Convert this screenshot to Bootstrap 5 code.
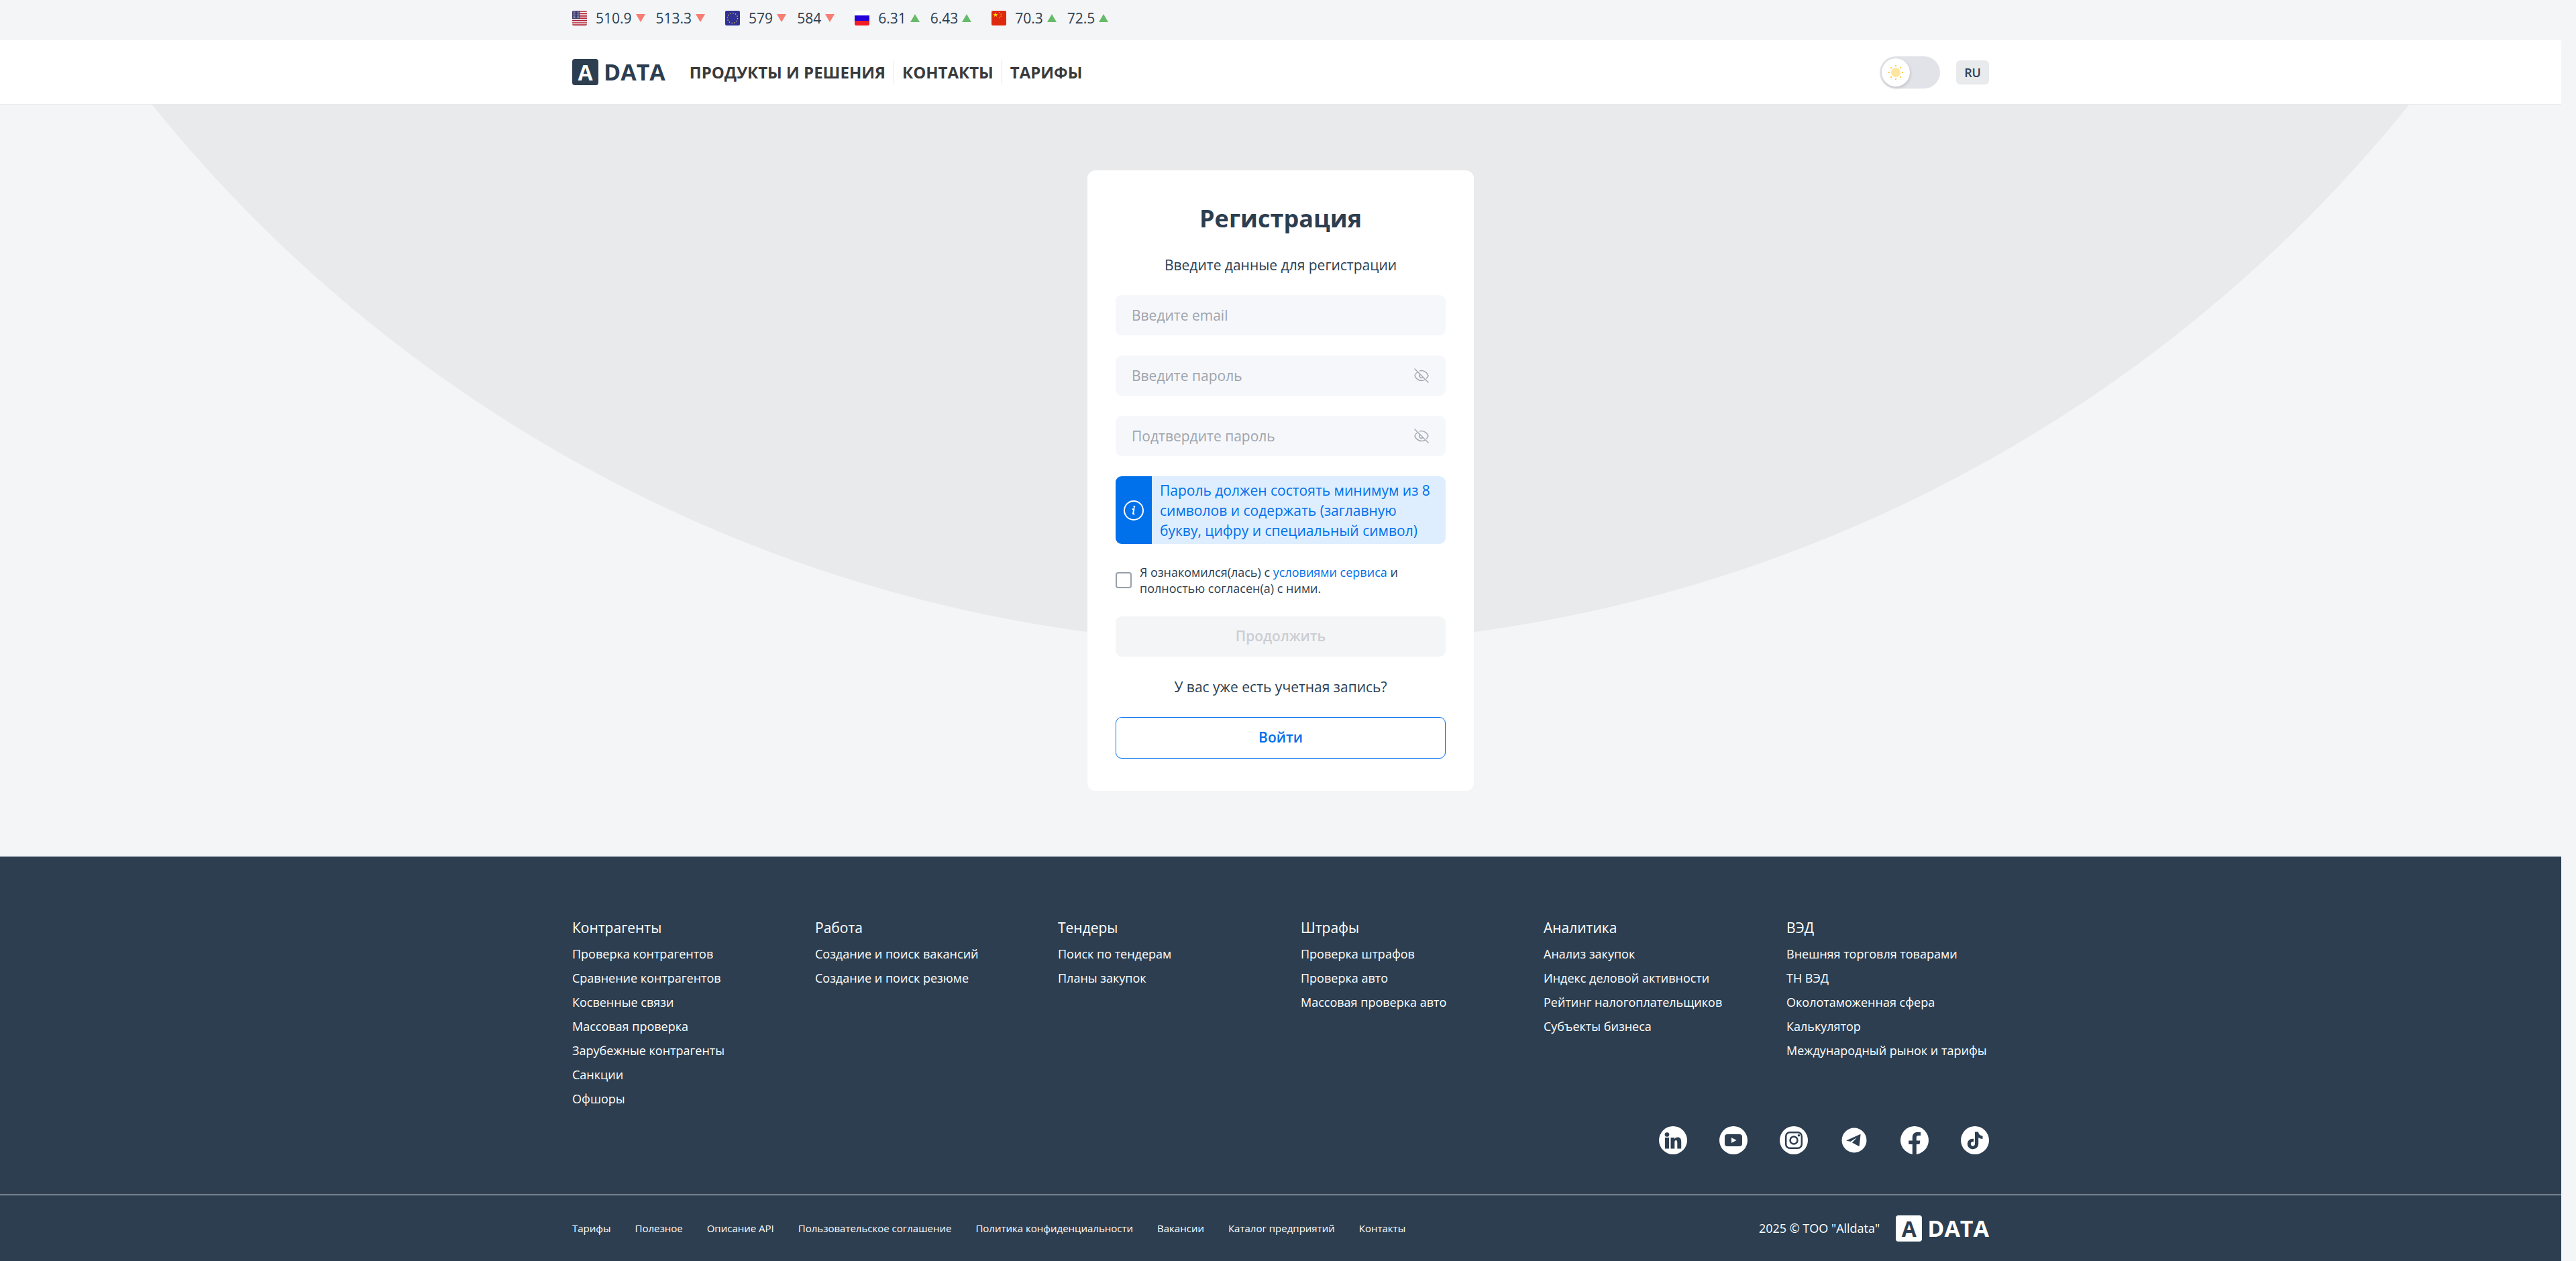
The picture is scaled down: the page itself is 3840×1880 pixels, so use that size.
<!DOCTYPE html>
<html lang="ru">
<head>
<meta charset="utf-8">
<meta name="viewport" content="width=device-width, initial-scale=1">
<title>Регистрация — Adata</title>
<link href="https://cdn.jsdelivr.net/npm/bootstrap@5.3.0/dist/css/bootstrap.min.css" rel="stylesheet">
<style>
:root { --ink: #2c3e50; --page: #f4f5f7; --shade: #e9eaec; --blue: #0070eb; --gutter: 22px; }
body { font-family: "Open Sans", "Noto Sans", sans-serif; font-size: 21px; line-height: 30px; color: var(--ink); background: var(--page); padding-right: var(--gutter); min-height: 100vh; }
a { text-decoration: none; color: inherit; }
.wrap { width: 100%; max-width: 2112px; margin: 0 auto; }
.rates { height: 60px; padding-bottom: 6px; }
.rates .wrap { gap: 30px; }
.flag { width: 22px; height: 22px; margin-right: 13px; border-radius: 2px; }
.rate { display: flex; align-items: center; gap: 6px; }
.rate + .rate { margin-left: 16px; }
.rate svg { width: 14px; height: 12px; }
.topbar { height: 96px; background: #fff; border-bottom: 1px solid var(--shade); }
.brand { display: flex; align-items: center; font-size: 34px; font-weight: 700; line-height: 39px; gap: 8px; color: var(--ink); }
.brand-box { width: 39px; height: 39px; border-radius: 4px; background: var(--ink); color: #fff; font-size: 32px; text-align: center; }
.brand-light { color: #fff; }
.brand-light .brand-box { background: #fff; color: var(--ink); }
.mainmenu { margin-left: 36px; font-size: 24px; font-weight: 700; line-height: 36px; color: #3a3a3a; }
.mainmenu a + a { border-left: 1px solid #e4e6e9; margin-left: 12px; padding-left: 12px; }
.theme { position: relative; width: 90px; height: 48px; }
.theme input { appearance: none; width: 90px; height: 48px; margin: 0; border-radius: 24px; background: #e2e3e8; display: block; }
.theme .knob { position: absolute; left: 3px; top: 3px; width: 42px; height: 42px; border-radius: 50%; background: #fff; box-shadow: 1px 2px 4px rgba(0,0,0,.15); pointer-events: none; }
.lang { height: 36px; padding: 0 12px; border: 0; border-radius: 6px; background: var(--shade); color: var(--ink); font-size: 18px; line-height: 36px; font-weight: 600; }
.stage { padding: 98px 0; background: radial-gradient(circle 2160px at 50% -1354px, var(--shade) 2159px, transparent 2160px); }
.panel { width: 576px; padding: 48px 42px; border-radius: 12px; background: #fff; gap: 30px; }
.panel h1 { font-size: 36px; line-height: 48px; font-weight: 700; margin: 0; text-align: center; }
.field { position: relative; }
.field .form-control { height: 60px; border: 0; border-radius: 9px; background: #f5f7fb; padding: 0 24px; font-size: 21px; line-height: 30px; }
.field .form-control::placeholder { color: #9ea4ac; opacity: 1; }
.eye { position: absolute; right: 24px; top: 18px; width: 24px; height: 24px; padding: 0; border: 0; background: none; display: block; line-height: 0; }
.hint { border-radius: 9px; overflow: hidden; background: #deeeff; color: var(--blue); min-height: 101px; }
.hint-icon { width: 54px; background: var(--blue); }
.hint p { padding: 0 12px; margin: 0; flex: 1; }
.agree { gap: 12px; font-size: 18px; line-height: 24px; }
.agree input { appearance: none; width: 24px; height: 24px; border: 2px solid #97a0aa; border-radius: 4px; margin: 0; flex: none; }
.agree a { color: var(--blue); }
.wide { height: 60px; border-radius: 9px; font-size: 21px; font-weight: 600; padding: 0; border: 0; width: 100%; }
.wide:disabled { background: #f4f5f7; color: #cbced3; opacity: 1; }
.enter { height: 62px; border: 1px solid var(--blue); color: var(--blue); background: #fff; }
.foot { background: var(--ink); color: #fff; }
.foot-main { padding-top: 91px; }
.foot-grid { display: grid; grid-template-columns: repeat(6, minmax(0, 1fr)); column-gap: 60px; }
.foot-grid h2 { font-size: 21px; line-height: 30px; font-weight: 400; margin: 0 0 6px; }
.foot-grid ul { font-size: 18px; line-height: 36px; margin: 0; white-space: nowrap; }
.socials { gap: 48px; padding: 23px 0 60px; }
.socials a, .socials svg { display: block; width: 42px; height: 42px; }
.foot-bottom { border-top: 1px solid #fff; height: 99px; }
.legal { gap: 36px; font-size: 15px; line-height: 24px; }
.copy { font-size: 18px; }
</style>
</head>
<body>
<div class="rates d-flex align-items-center">
  <div class="wrap d-flex">
    <div class="d-flex align-items-center">
      <svg class="flag" viewBox="0 0 22 22"><rect width="22" height="22" fill="#f2f2f4"/><path d="M0 1h22M0 4.400h22M0 7.800h22M0 11.200h22M0 14.600h22M0 18h22M0 21.200h22" stroke="#b22234" stroke-width="1.700"/><rect width="11" height="12" fill="#3c3b6e"/><path d="M1 2h10M1 5h10M1 8h10M1 10.500h10" stroke="#c5c5d8" stroke-width="1" stroke-dasharray="1 1"/></svg>
      <span class="rate">510.9 <svg viewBox="0 0 14 12"><path d="M0 0h14L7 12z" fill="#f77d74"/></svg></span>
      <span class="rate">513.3 <svg viewBox="0 0 14 12"><path d="M0 0h14L7 12z" fill="#f77d74"/></svg></span>
    </div>
    <div class="d-flex align-items-center">
      <svg class="flag" viewBox="0 0 22 22"><rect width="22" height="22" fill="#2f3194"/><circle cx="11" cy="11" r="7.500" fill="none" stroke="#d8c63c" stroke-width="1.500" stroke-dasharray="1.400 2.527"/></svg>
      <span class="rate">579 <svg viewBox="0 0 14 12"><path d="M0 0h14L7 12z" fill="#f77d74"/></svg></span>
      <span class="rate">584 <svg viewBox="0 0 14 12"><path d="M0 0h14L7 12z" fill="#f77d74"/></svg></span>
    </div>
    <div class="d-flex align-items-center">
      <svg class="flag" viewBox="0 0 22 22"><rect width="22" height="22" fill="#fff"/><rect y="7" width="22" height="8" fill="#2400d8"/><rect y="15" width="22" height="7" fill="#ef1c24"/></svg>
      <span class="rate">6.31 <svg viewBox="0 0 14 12"><path d="M0 12h14L7 0z" fill="#66bb6a"/></svg></span>
      <span class="rate">6.43 <svg viewBox="0 0 14 12"><path d="M0 12h14L7 0z" fill="#66bb6a"/></svg></span>
    </div>
    <div class="d-flex align-items-center">
      <svg class="flag" viewBox="0 0 22 22"><rect width="22" height="22" fill="#de2910"/><path d="M6 2.500l.9 2.500h2.600l-2.100 1.600.8 2.500L6 7.600 3.800 9.100l.8-2.500L2.500 5h2.600z" fill="#ffde00"/><path d="M11 2h1.500v1.300H11zM13.500 4.500H15v1.300h-1.500zM13.500 7.500H15v1.300h-1.500zM11 10h1.500v1.300H11z" fill="#f5b50a"/></svg>
      <span class="rate">70.3 <svg viewBox="0 0 14 12"><path d="M0 12h14L7 0z" fill="#66bb6a"/></svg></span>
      <span class="rate">72.5 <svg viewBox="0 0 14 12"><path d="M0 12h14L7 0z" fill="#66bb6a"/></svg></span>
    </div>
  </div>
</div>

<header class="topbar d-flex align-items-center">
  <div class="wrap d-flex align-items-center">
    <a class="brand" href="#"><span class="brand-box">A</span><span>DATA</span></a>
    <nav class="mainmenu d-flex">
      <a href="#">ПРОДУКТЫ И РЕШЕНИЯ</a><a href="#">КОНТАКТЫ</a><a href="#">ТАРИФЫ</a>
    </nav>
    <div class="d-flex align-items-center gap-4 ms-auto">
      <label class="theme">
        <input type="checkbox" role="switch" aria-label="Тёмная тема">
        <svg class="knob" viewBox="0 0 42 42"><circle cx="21" cy="21" r="7" fill="#fde7a0"/><path d="M20 10h2v2h-2zM20 30h2v2h-2zM10 20h2v2h-2zM30 20h2v2h-2zM13 13h2v2h-2zM27 13h2v2h-2zM13 27h2v2h-2zM27 27h2v2h-2z" fill="#fbd040"/></svg>
      </label>
      <button class="lang" type="button">RU</button>
    </div>
  </div>
</header>

<main class="stage d-flex justify-content-center">
  <form class="panel d-flex flex-column">
    <h1>Регистрация</h1>
    <div class="text-center">Введите данные для регистрации</div>
    <div class="field"><input class="form-control" type="email" placeholder="Введите email" aria-label="Email"></div>
    <div class="field">
      <input class="form-control" type="password" placeholder="Введите пароль" aria-label="Пароль">
      <button class="eye" type="button" aria-label="Показать пароль"><svg width="24" height="24" viewBox="0 0 24 24" fill="none" stroke="#a3a9b1" stroke-width="1.500" stroke-linecap="round"><path d="M2 2l20 20M6.500 6.500C4 8.200 2.300 10.500 2 12c.8 3 4.700 7.500 10 7.500 2 0 3.900-.7 5.500-1.700M9.500 4.900c.8-.3 1.600-.4 2.500-.4 5.300 0 9.200 4.500 10 7.500-.3 1.200-1.100 2.600-2.500 4M9.500 10.500a3 3 0 0 0 4.200 4.200"/></svg></button>
    </div>
    <div class="field">
      <input class="form-control" type="password" placeholder="Подтвердите пароль" aria-label="Подтверждение пароля">
      <button class="eye" type="button" aria-label="Показать пароль"><svg width="24" height="24" viewBox="0 0 24 24" fill="none" stroke="#a3a9b1" stroke-width="1.500" stroke-linecap="round"><path d="M2 2l20 20M6.500 6.500C4 8.200 2.300 10.500 2 12c.8 3 4.700 7.500 10 7.500 2 0 3.900-.7 5.500-1.700M9.500 4.900c.8-.3 1.600-.4 2.500-.4 5.300 0 9.200 4.500 10 7.500-.3 1.200-1.100 2.600-2.500 4M9.500 10.500a3 3 0 0 0 4.200 4.200"/></svg></button>
    </div>
    <div class="hint d-flex">
      <div class="hint-icon d-flex align-items-center justify-content-center">
        <svg width="30" height="30" viewBox="0 0 30 30" fill="none" stroke="#fff"><circle cx="15" cy="15" r="14" stroke-width="2"/><path d="M12.700 13.300l2.700-.5-1.300 6.700c-.2 1 .6 1.100 2 .3" stroke-width="2"/><circle cx="15.900" cy="9.500" r="1.400" fill="#fff" stroke="none"/></svg>
      </div>
      <p class="align-self-center">Пароль должен состоять минимум из 8 символов и содержать (заглавную букву, цифру и специальный символ)</p>
    </div>
    <div class="agree d-flex align-items-center">
      <input type="checkbox" id="agree">
      <label for="agree">Я ознакомился(лась) с <a href="#">условиями сервиса</a> и полностью согласен(а) с ними.</label>
    </div>
    <button class="btn wide" type="submit" disabled>Продолжить</button>
    <div class="text-center">У вас уже есть учетная запись?</div>
    <button class="btn wide enter" type="button">Войти</button>
  </form>
</main>

<footer class="foot">
  <div class="foot-main">
    <div class="wrap">
      <div class="foot-grid">
        <section><h2>Контрагенты</h2><ul class="list-unstyled"><li><a href="#">Проверка контрагентов</a></li><li><a href="#">Сравнение контрагентов</a></li><li><a href="#">Косвенные связи</a></li><li><a href="#">Массовая проверка</a></li><li><a href="#">Зарубежные контрагенты</a></li><li><a href="#">Санкции</a></li><li><a href="#">Офшоры</a></li></ul></section>
        <section><h2>Работа</h2><ul class="list-unstyled"><li><a href="#">Создание и поиск вакансий</a></li><li><a href="#">Создание и поиск резюме</a></li></ul></section>
        <section><h2>Тендеры</h2><ul class="list-unstyled"><li><a href="#">Поиск по тендерам</a></li><li><a href="#">Планы закупок</a></li></ul></section>
        <section><h2>Штрафы</h2><ul class="list-unstyled"><li><a href="#">Проверка штрафов</a></li><li><a href="#">Проверка авто</a></li><li><a href="#">Массовая проверка авто</a></li></ul></section>
        <section><h2>Аналитика</h2><ul class="list-unstyled"><li><a href="#">Анализ закупок</a></li><li><a href="#">Индекс деловой активности</a></li><li><a href="#">Рейтинг налогоплательщиков</a></li><li><a href="#">Субъекты бизнеса</a></li></ul></section>
        <section><h2>ВЭД</h2><ul class="list-unstyled"><li><a href="#">Внешняя торговля товарами</a></li><li><a href="#">ТН ВЭД</a></li><li><a href="#">Околотаможенная сфера</a></li><li><a href="#">Калькулятор</a></li><li><a href="#">Международный рынок и тарифы</a></li></ul></section>
      </div>
      <div class="socials d-flex justify-content-end">
        <a href="#" aria-label="LinkedIn"><svg viewBox="0 0 42 42"><circle cx="21" cy="21" r="21" fill="#fff"/><g fill="#2c3e50"><circle cx="12" cy="12.500" r="3.300"/><path d="M9 17h6v16.500H9zM17.500 17h5.600v2.200c1-1.600 2.600-2.600 4.700-2.600 4 0 5.400 2.600 5.400 6.800v10.100h-5.900v-9c0-2.200-.5-3.400-2-3.400s-2 1.200-2 3.400v9h-5.800z"/></g></svg></a>
        <a href="#" aria-label="YouTube"><svg viewBox="0 0 42 42"><circle cx="21" cy="21" r="21" fill="#fff"/><rect x="8" y="12" width="26" height="18" rx="4" fill="#2c3e50"/><path d="M18 17l7.500 4-7.500 4z" fill="#fff"/></svg></a>
        <a href="#" aria-label="Instagram"><svg viewBox="0 0 42 42"><circle cx="21" cy="21" r="21" fill="#fff"/><g fill="none" stroke="#2c3e50" stroke-width="2.500"><rect x="9.200" y="9.200" width="23.600" height="23.600" rx="6"/><circle cx="21" cy="21" r="5.500"/></g><circle cx="28.500" cy="13.800" r="1.800" fill="#2c3e50"/></svg></a>
        <a href="#" aria-label="Telegram"><svg viewBox="0 0 42 42"><circle cx="21" cy="21" r="18.500" fill="#fff"/><path d="M9 21.500L30 12c.5 0 .6.300.5.800l-1.800 16.500c-.1.600-.5.800-1 .5L18 24.500l7-7.500-9.500 6z" fill="#2c3e50"/></svg></a>
        <a href="#" aria-label="Facebook"><svg viewBox="0 0 42 42"><circle cx="21" cy="21" r="21" fill="#fff"/><path d="M17.800 42V27h-5.600v-5.500h5.600v-5c0-5 3-7.500 7.400-7.500H30v5h-3c-2.500 0-3.200 1.200-3.200 3v4.500h5.600L28.500 27h-4.700v15z" fill="#2c3e50"/></svg></a>
        <a href="#" aria-label="TikTok"><svg viewBox="0 0 42 42"><circle cx="21" cy="21" r="21" fill="#fff"/><path d="M21 8.500h5c.4 3.400 2.700 5.700 6.500 6v4.600c-2.400 0-4.600-.7-6.300-2v9c0 5-3.700 8.200-8.200 8.200s-8.200-3.300-8.200-7.800c0-5 4-8.400 9.300-7.800v4.700c-2.500-.6-4.300.8-4.300 3 0 1.900 1.400 3.300 3.100 3.300 2 0 3.100-1.400 3.100-3.600z" fill="#2c3e50"/></svg></a>
      </div>
    </div>
  </div>
  <div class="foot-bottom d-flex align-items-center">
    <div class="wrap d-flex align-items-center">
      <nav class="legal d-flex"><a href="#">Тарифы</a><a href="#">Полезное</a><a href="#">Описание API</a><a href="#">Пользовательское соглашение</a><a href="#">Политика конфиденциальности</a><a href="#">Вакансии</a><a href="#">Каталог предприятий</a><a href="#">Контакты</a></nav>
      <div class="d-flex align-items-center gap-4 ms-auto"><span class="copy">2025 © ТОО "Alldata"</span>
      <a class="brand brand-light" href="#"><span class="brand-box">A</span><span>DATA</span></a></div>
    </div>
  </div>
</footer>
<script src="https://cdn.jsdelivr.net/npm/bootstrap@5.3.0/dist/js/bootstrap.bundle.min.js"></script>
</body>
</html>
